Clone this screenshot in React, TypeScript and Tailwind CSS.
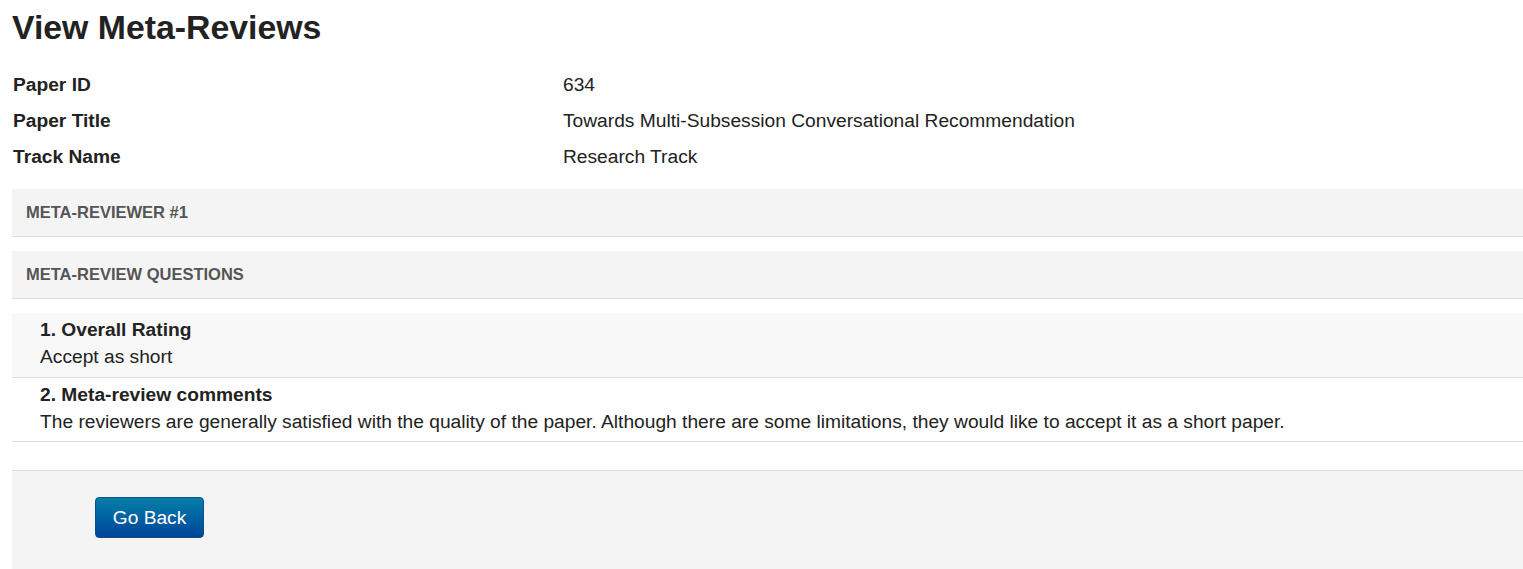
import React from "react";

export default function App() {
  const info = [
    ["Paper ID", "634"],
    ["Paper Title", "Towards Multi-Subsession Conversational Recommendation"],
    ["Track Name", "Research Track"],
  ];
  const questions = [
    { q: "1. Overall Rating", a: "Accept as short", cls: "bg-[#f8f8f8] pb-[7px]" },
    {
      q: "2. Meta-review comments",
      a: "The reviewers are generally satisfied with the quality of the paper. Although there are some limitations, they would like to accept it as a short paper.",
      cls: "bg-white pb-[6px]",
    },
  ];
  return (
    <div className="min-h-screen bg-white pl-3 font-['Liberation_Sans',Arial,sans-serif] text-[#222]">
      <h1 className="pt-[9px] text-[33.8px] font-bold leading-[36px] text-[#222]">View Meta-Reviews</h1>
      <div className="mt-[22px] grid grid-cols-[551px_1fr] text-[19.2px] leading-[36px]">
        {info.map(([k, v]) => (
          <React.Fragment key={k}>
            <div className="pl-px font-bold">{k}</div>
            <div>{v}</div>
          </React.Fragment>
        ))}
      </div>
      <div className="mt-[14px] flex h-[48px] items-center border-b border-[#dddddd] bg-[#f4f4f4] px-[14px] text-[16.5px] font-bold text-[#555]">
        META-REVIEWER #1
      </div>
      <div className="mt-[14px] flex h-[48px] items-center border-b border-[#dddddd] bg-[#f4f4f4] px-[14px] text-[16.5px] font-bold text-[#555]">
        META-REVIEW QUESTIONS
      </div>
      <div className="mt-[14px]">
        {questions.map((x) => (
          <div key={x.q} className={`${x.cls} border-b border-[#dddddd] px-[28px] pt-[3px] leading-[27px]`}>
            <div className="text-[19.2px] font-bold">{x.q}</div>
            <div className="text-[19.2px]">{x.a}</div>
          </div>
        ))}
      </div>
      <div className="mt-[28px] border-t border-[#dddddd] bg-[#f4f4f4] pt-[26px] pb-[40px] pl-[83px]">
        <button className="h-[41px] w-[109px] rounded-[4px] border border-[#0a4f8f] bg-gradient-to-b from-[#0b7ea8] to-[#00449a] text-[19.2px] leading-[21px] text-white">
          Go Back
        </button>
      </div>
    </div>
  );
}
